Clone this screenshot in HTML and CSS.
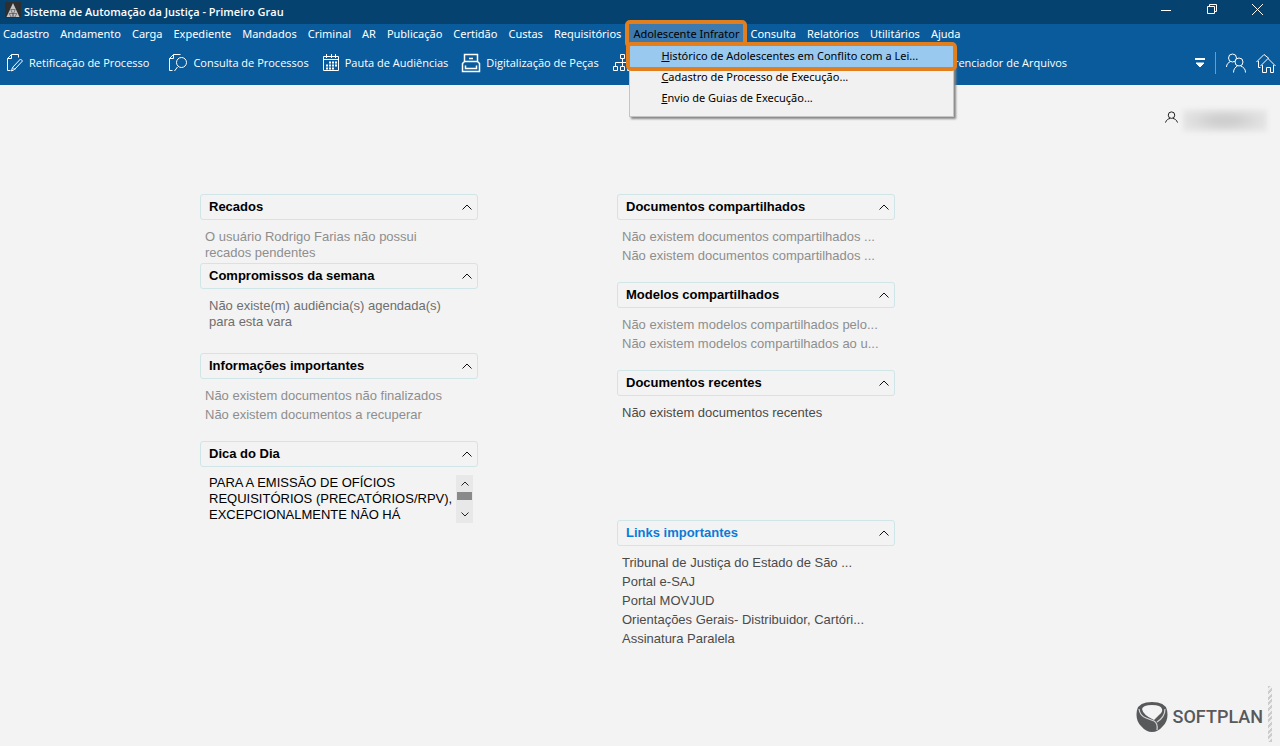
FILE: index.html
```html
<!DOCTYPE html>
<html lang="pt-BR">
<head>
<meta charset="utf-8">
<title>Sistema de Automação da Justiça - Primeiro Grau</title>
<link rel="stylesheet" href="styles.css">
</head>
<body>
<svg class="defs" aria-hidden="true">
  <symbol id="chevron" viewBox="0 0 10 6"><path d="M0.5 5.5 5 1l4.500 4.500"/></symbol>
</svg>
<header class="header">
  <div class="titlebar">
    <svg class="app-icon" viewBox="0 0 16 16"><rect width="16" height="16" fill="#2f2f2f"/><path d="M8 1 1.500 15h13z" fill="#c4c4c4"/><path d="M5.500 7.500h5M4 11.500h8" stroke="#555" stroke-width=".7"/><path d="M6 8l3 7M10 8l-3 7M4.500 12 6 15M11.500 12 10 15" stroke="#555" stroke-width=".7"/></svg>
    <h1 class="title">Sistema de Automação da Justiça - Primeiro Grau</h1>
    <div class="window-controls">
      <button class="win-btn" aria-label="Minimizar"><svg width="12" height="14"><path d="M1 8.500h10"/></svg></button>
      <button class="win-btn" aria-label="Restaurar"><svg width="12" height="14"><path d="M1.500 4.500h7v7h-7zM3.500 4.500v-2h7v7h-2"/></svg></button>
      <button class="win-btn" aria-label="Fechar"><svg width="14" height="14"><path d="M1 2 12 13M12 2 1 13"/></svg></button>
    </div>
  </div>
  <nav class="menubar">
    <button class="menu">Cadastro</button>
    <button class="menu">Andamento</button>
    <button class="menu">Carga</button>
    <button class="menu">Expediente</button>
    <button class="menu">Mandados</button>
    <button class="menu">Criminal</button>
    <button class="menu">AR</button>
    <button class="menu">Publicação</button>
    <button class="menu">Certidão</button>
    <button class="menu">Custas</button>
    <button class="menu">Requisitórios</button>
    <div class="menu-open">
      <button class="menu menu-active">Adolescente Infrator</button>
      <div class="dropdown">
        <button class="option option-active"><u>H</u>istórico de Adolescentes em Conflito com a Lei...</button>
        <button class="option"><u>C</u>adastro de Processo de Execução...</button>
        <button class="option"><u>E</u>nvio de Guias de Execução...</button>
      </div>
    </div>
    <button class="menu">Consulta</button>
    <button class="menu">Relatórios</button>
    <button class="menu">Utilitários</button>
    <button class="menu">Ajuda</button>
  </nav>
  <div class="toolbar">
    <button class="tool tool-first"><svg width="18" height="20"><path d="M5.500 1.500h7v3M5.500 1.500l-4 4v12h3M5.500 1.500v4h-4M14.500 6l2 2-8 8.500-3 1.500 1-3.500zM7 14.500l2 2"/></svg>Retificação de Processo</button>
    <button class="tool"><svg width="20" height="20"><path d="M5.500 1.500h7M5.500 1.500l-4 4v12h3M5.500 1.500v4h-4M9.500 14l-3 4"/><circle cx="13.500" cy="9.500" r="5"/></svg>Consulta de Processos</button>
    <button class="tool"><svg width="18" height="20"><path d="M1.500 3.500h15v14h-15zM1 6.500h16M4.500 1v4M9.500 1v4M13.500 1v4"/><path d="M7 9.500h8M4 12.500h11M4 15.500h8" stroke-width="2" stroke-dasharray="2 1"/></svg>Pauta de Audiências</button>
    <button class="tool"><svg width="20" height="20"><path d="M3.500 9V1.500h13V9M1.500 18.500v-8l2-2h13l2 2v8zM4.500 12.500v3h11v-3M8 5.500h4" stroke-width="1.500"/></svg>Digitalização de Peças</button>
    <button class="tool" aria-label="Fluxo"><svg width="20" height="20"><path d="M8.500 1.500h4v4h-4zM1.500 13.500h4v4h-4zM8.500 13.500h4v4h-4zM15.500 13.500h4v4h-4zM3.500 13v-3.500h14V13M10.500 6v7"/></svg></button>
    <button class="tool tool-files">Gerenciador de Arquivos</button>
    <div class="tool-end">
      <button class="tool" aria-label="Mais ferramentas"><svg width="10" height="10"><path d="M0 1h10" stroke-width="2"/><path d="M1 5h8L5 9z" fill="#fff"/></svg></button>
      <span class="divider"></span>
      <button class="tool" aria-label="Usuários"><svg width="20" height="20"><circle cx="6.500" cy="5" r="4"/><circle cx="13" cy="9" r="4" class="front"/><path d="M.5 14c0-3 2-4.500 4-5.500M7.500 19.500c0-3.500 2-5.500 4-6.500M14.500 13c3 1 5 3 5 6.500"/></svg></button>
      <button class="tool" aria-label="Início"><svg width="20" height="20"><path d="M.5 9 8 1.500l5 4M2.500 8v6.500h2M4.500 13l7.500-7.500 7.500 7.500M6.500 12v7.500h4v-5h4v5h3V12"/></svg></button>
    </div>
  </div>
</header>
<main class="main">
  <div class="user">
    <svg class="user-icon" viewBox="0 0 14 12"><circle cx="7" cy="4" r="3.500"/><path d="M.5 12c1-3 3-4 5-4.500M13.500 12c-1-3-3-4-5-4.500"/></svg>
    <span class="user-name"></span>
  </div>
  <div class="board">
    <div class="column">
      <section class="card card-tight">
        <h2 class="card-head">Recados<button class="fold" aria-label="Recolher"><svg><use href="#chevron"/></svg></button></h2>
        <p class="text muted">O usuário Rodrigo Farias não possui recados pendentes</p>
      </section>
      <section class="card">
        <h2 class="card-head">Compromissos da semana<button class="fold" aria-label="Recolher"><svg><use href="#chevron"/></svg></button></h2>
        <p class="text inset medium">Não existe(m) audiência(s) agendada(s) para esta vara</p>
      </section>
      <section class="card">
        <h2 class="card-head">Informações importantes<button class="fold" aria-label="Recolher"><svg><use href="#chevron"/></svg></button></h2>
        <ul class="list muted"><li>Não existem documentos não finalizados</li><li>Não existem documentos a recuperar</li></ul>
      </section>
      <section class="card">
        <h2 class="card-head">Dica do Dia<button class="fold" aria-label="Recolher"><svg><use href="#chevron"/></svg></button></h2>
        <div class="tip">
          <p class="text tip-text">PARA A EMISSÃO DE OFÍCIOS REQUISITÓRIOS (PRECATÓRIOS/RPV), EXCEPCIONALMENTE NÃO HÁ</p>
          <div class="scrollbar">
            <button class="scroll-btn" aria-label="Subir"><svg width="8" height="5"><path d="M.5 4.500 4 1l3.500 3.500"/></svg></button>
            <span class="thumb"></span>
            <button class="scroll-btn scroll-down" aria-label="Descer"><svg width="8" height="5"><path d="M.5.5 4 4 7.500.5"/></svg></button>
          </div>
        </div>
      </section>
    </div>
    <div class="column">
      <section class="card">
        <h2 class="card-head">Documentos compartilhados<button class="fold" aria-label="Recolher"><svg><use href="#chevron"/></svg></button></h2>
        <ul class="list muted"><li>Não existem documentos compartilhados ...</li><li>Não existem documentos compartilhados ...</li></ul>
      </section>
      <section class="card">
        <h2 class="card-head">Modelos compartilhados<button class="fold" aria-label="Recolher"><svg><use href="#chevron"/></svg></button></h2>
        <ul class="list muted"><li>Não existem modelos compartilhados pelo...</li><li>Não existem modelos compartilhados ao u...</li></ul>
      </section>
      <section class="card card-tall">
        <h2 class="card-head">Documentos recentes<button class="fold" aria-label="Recolher"><svg><use href="#chevron"/></svg></button></h2>
        <ul class="list"><li>Não existem documentos recentes</li></ul>
      </section>
      <section class="card">
        <h2 class="card-head card-head-link">Links importantes<button class="fold" aria-label="Recolher"><svg><use href="#chevron"/></svg></button></h2>
        <ul class="list">
          <li><a href="#">Tribunal de Justiça do Estado de São ...</a></li>
          <li><a href="#">Portal e-SAJ</a></li>
          <li><a href="#">Portal MOVJUD</a></li>
          <li><a href="#">Orientações Gerais- Distribuidor, Cartóri...</a></li>
          <li><a href="#">Assinatura Paralela</a></li>
        </ul>
      </section>
    </div>
  </div>
  <footer class="brand">
    <svg class="brand-mark" viewBox="0 0 32 32"><path d="M1 9Q3 1 16 1t15 8q2 10-4 16-5 6-11 6T5 25Q-1 19 1 9z" fill="#58595b"/><path d="M6 8Q7 4 16 4t10 4q1 3-3 6l-5 5Q7 14 6 8z" fill="#f3f3f3"/><path d="M3 8q1 7 7 9l8 3q4 2 3 9M29 8q0 8-8 13" fill="none" stroke="#d5d5d5" stroke-width="1.200"/></svg>
    <span class="brand-name">SOFTPLAN</span>
    <span class="grip"></span>
  </footer>
</main>
</body>
</html>
```
FILE: styles.css
```css
* { box-sizing: border-box; }
body {
  margin: 0;
  min-height: 100vh;
  display: flex;
  flex-direction: column;
  background: #f3f3f3;
  color: #4a4a4a;
  font: 13px/16px "Liberation Sans", Arial, sans-serif;
}
h1, h2, p, ul { margin: 0; padding: 0; }
ul { list-style: none; }
a { color: inherit; text-decoration: none; }
button { margin: 0; padding: 0; border: 0; background: none; color: inherit; font: inherit; }
svg { flex: none; fill: none; }
.defs { position: absolute; width: 0; height: 0; }

.header { background: #0a5b9c; color: #fff; font: 11px/16px "Open Sans", "Noto Sans", sans-serif; }
.titlebar { display: flex; align-items: center; height: 24px; padding-left: 5px; gap: 3px; background: #06426f; }
.app-icon { width: 16px; height: 16px; margin-bottom: 4px; }
.title { font-size: 11px; font-weight: 600; }
.window-controls { display: flex; margin-left: auto; }
.win-btn { width: 46px; height: 24px; padding: 0 0 6px 2px; display: flex; justify-content: center; align-items: center; stroke: #fff; }
.menubar { display: flex; height: 20px; padding-left: 3px; gap: 11px; align-items: stretch; font-family: "Noto Sans", sans-serif; }
.menu { white-space: nowrap; }
.menu-open { position: relative; display: flex; margin: 0 -4px 0 -3px; }
.menu-active {
  padding: 0 4px;
  background: #3d7aaf;
  color: #000;
  outline: 4px solid #e37e1c;
  border-radius: 1px;
}
.dropdown {
  position: absolute;
  z-index: 2;
  top: 22px;
  left: 0;
  width: 325px;
  padding-bottom: 7px;
  border: 1px solid #c4c4c4;
  border-top: 0;
  background: #f1f1f1;
  color: #000;
  box-shadow: 2px 2px 2px #888;
}
.option { display: block; width: 100%; height: 21px; padding: 0 0 1px 31px; text-align: left; white-space: nowrap; }
.option-active { background: #99c9ef; outline: 4px solid #e37e1c; border-radius: 1px; }
.toolbar { display: flex; align-items: center; height: 41px; padding: 0 4px 3px 6px; gap: 13px; }
.tool { display: flex; align-items: center; gap: 5px; white-space: nowrap; stroke: #fff; }
.tool-first { padding-right: 6px; }
.tool-files { margin-left: 295px; }
.tool-end { display: flex; align-items: center; gap: 10px; margin-left: auto; }
.divider { width: 1px; height: 22px; background: #8b9499; }
.front { fill: #0a5b9c; }

.main { flex: 1; display: flex; flex-direction: column; }
.user { display: flex; align-items: center; justify-content: flex-end; gap: 5px; height: 23px; margin: 24px 13px 0 0; }
.user-icon { width: 13px; height: 12px; margin-bottom: 8px; stroke: #111; }
.user-name { width: 84px; height: 23px; background: radial-gradient(#cfcfcf 20%, #e0e0e0 60%, #ebebeb); filter: blur(2px); }
.board { display: grid; grid-template-columns: 278px 278px; column-gap: 139px; padding: 62px 0 0 200px; }
.card { min-height: 88px; }
.card-tight { min-height: 69px; }
.card-tall { min-height: 150px; }
.column .card-tight + .card { min-height: 90px; }
.card-head {
  display: flex;
  align-items: center;
  justify-content: space-between;
  height: 26px;
  padding: 0 5px 0 8px;
  border: 1px solid #d0e5e7;
  border-radius: 3px;
  color: #000;
  font-size: 13px;
}
.card-head-link { color: #0b7bd8; }
.fold { display: flex; stroke: #111; }
.fold svg { width: 10px; height: 6px; }
.text { padding: 9px 24px 0 5px; }
.inset { padding-left: 9px; }
.muted { color: #8e8e8e; }
.medium { color: #6e6e6e; }
.list { padding: 7px 0 0 5px; line-height: 19px; white-space: nowrap; }
.tip { display: flex; justify-content: space-between; padding: 8px 5px 0 9px; }
.tip-text { flex: 1; padding: 0; color: #000; }
.scrollbar { display: flex; flex-direction: column; align-items: center; width: 17px; height: 48px; background: #e8e8e8; }
.scroll-btn { display: flex; align-items: center; height: 17px; stroke: #222; }
.thumb { width: 15px; height: 8px; background: #8a8a8a; }
.scroll-down { margin-top: auto; }

.brand { display: flex; align-items: center; justify-content: flex-end; gap: 5px; margin: auto 8px 4px 0; height: 56px; color: #58595b; }
.brand-mark { width: 32px; height: 32px; margin-top: 6px; }
.brand-name { margin-top: 6px; font: 500 18px/24px Roboto, sans-serif; }
.grip { width: 4px; height: 56px; background: repeating-linear-gradient(135deg, #ccc 0 2px, #eee 2px 4px); }
```
